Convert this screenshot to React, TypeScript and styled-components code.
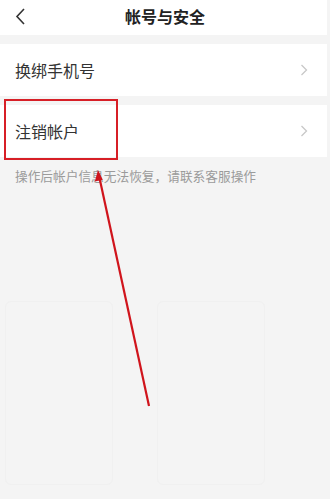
import React, { ReactElement } from 'react';
import styled, { createGlobalStyle } from 'styled-components';

const GlobalStyle = createGlobalStyle`
  html, body {
    margin: 0;
    padding: 0;
    background: #f4f4f4;
  }
  body {
    font-family: "Noto Sans CJK SC", "Noto Sans", sans-serif;
  }
`;

const Page = styled.div`
  position: relative;
  width: 330px;
  height: 499px;
  padding-right: 3px;
  box-sizing: border-box;
  background: #f4f4f4;
  overflow: hidden;
`;

const Header = styled.header`
  position: relative;
  height: 35px;
  background: #fff;
  display: flex;
  align-items: center;
  justify-content: center;
  padding-bottom: 3px;
  box-sizing: border-box;
`;

const BackButton = styled.button`
  position: absolute;
  left: 12px;
  top: 6px;
  width: 16px;
  height: 20px;
  padding: 0;
  border: none;
  background: none;
  display: flex;
  align-items: center;
  justify-content: center;
`;

const Title = styled.h1`
  margin: 0;
  margin-left: 3px;
  font-size: 16px;
  font-weight: 700;
  color: #222;
  line-height: 1;
`;

const Group = styled.section`
  margin-top: 9px;
  background: #fff;
`;

const Row = styled.div`
  height: 52px;
  display: flex;
  align-items: center;
  justify-content: space-between;
  padding: 0 19px 0 15px;
`;

const RowLabel = styled.span`
  font-size: 16px;
  color: #333;
  line-height: 1;
`;

const Hint = styled.p`
  margin: 13px 0 0 15px;
  font-size: 12.7px;
  color: #9b9b9b;
  line-height: 1;
`;

const Cards = styled.div`
  display: flex;
  gap: 44px;
  margin: 118px 0 0 5px;
`;

const Card = styled.div`
  width: 108px;
  height: 184px;
  border: 1px solid #f0f0f0;
  border-radius: 6px;
  box-sizing: border-box;
`;

const Highlight = styled.div`
  position: absolute;
  left: 4px;
  top: 99px;
  width: 114px;
  height: 61px;
  border: 2px solid #d71f26;
  box-sizing: border-box;
`;

const Annotation = styled.svg`
  position: absolute;
  left: 0;
  top: 0;
  pointer-events: none;
`;

function Chevron(): ReactElement {
  return (
    <svg width="8" height="12" viewBox="0 0 8 12">
      <path d="M1.5 1 L6.5 6 L1.5 11" fill="none" stroke="#c8c8c8" strokeWidth="1.3" />
    </svg>
  );
}

function SettingRow({ label }: { label: string }): ReactElement {
  return (
    <Row>
      <RowLabel>{label}</RowLabel>
      <Chevron />
    </Row>
  );
}

export default function App(): ReactElement {
  return (
    <Page>
      <GlobalStyle />
      <Header>
        <BackButton aria-label="返回">
          <svg width="10" height="17" viewBox="0 0 10 17">
            <path d="M9 1 L2 8.5 L9 16" fill="none" stroke="#333" strokeWidth="1.6" />
          </svg>
        </BackButton>
        <Title>帐号与安全</Title>
      </Header>
      <Group>
        <SettingRow label="换绑手机号" />
      </Group>
      <Group>
        <SettingRow label="注销帐户" />
      </Group>
      <Hint>操作后帐户信息无法恢复，请联系客服操作</Hint>
      <Cards>
        <Card />
        <Card />
      </Cards>
      <Highlight />
      <Annotation width="330" height="499" viewBox="0 0 330 499">
        <line x1="149" y1="406" x2="99.5" y2="178" stroke="#d0141c" strokeWidth="2.2" />
        <polygon points="98,170 94.8,181.5 102.8,179.8" fill="#d0141c" />
      </Annotation>
    </Page>
  );
}
